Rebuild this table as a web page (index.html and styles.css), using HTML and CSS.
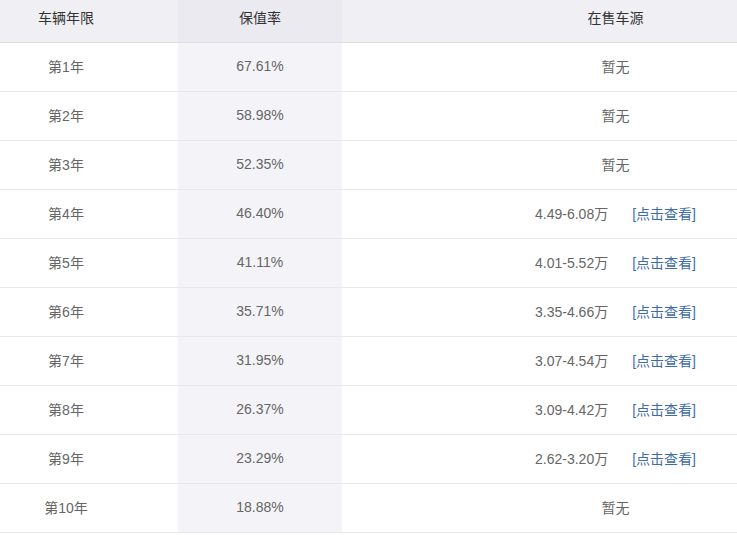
FILE: index.html
```html
<!DOCTYPE html>
<html lang="zh-CN">
<head>
<meta charset="utf-8">
<title>保值率</title>
<link rel="stylesheet" href="styles.css">
</head>
<body>
<table class="rate-table">
  <thead>
    <tr>
      <th class="c-year">车辆年限</th>
      <th class="c-rate">保值率</th>
      <th class="c-src">在售车源</th>
    </tr>
  </thead>
  <tbody>
    <tr><td class="c-year">第1年</td><td class="c-rate">67.61%</td><td class="c-src">暂无</td></tr>
    <tr><td class="c-year">第2年</td><td class="c-rate">58.98%</td><td class="c-src">暂无</td></tr>
    <tr><td class="c-year">第3年</td><td class="c-rate">52.35%</td><td class="c-src">暂无</td></tr>
    <tr><td class="c-year">第4年</td><td class="c-rate">46.40%</td><td class="c-src"><span class="price">4.49-6.08万</span><a class="link" href="#">[点击查看]</a></td></tr>
    <tr><td class="c-year">第5年</td><td class="c-rate">41.11%</td><td class="c-src"><span class="price">4.01-5.52万</span><a class="link" href="#">[点击查看]</a></td></tr>
    <tr><td class="c-year">第6年</td><td class="c-rate">35.71%</td><td class="c-src"><span class="price">3.35-4.66万</span><a class="link" href="#">[点击查看]</a></td></tr>
    <tr><td class="c-year">第7年</td><td class="c-rate">31.95%</td><td class="c-src"><span class="price">3.07-4.54万</span><a class="link" href="#">[点击查看]</a></td></tr>
    <tr><td class="c-year">第8年</td><td class="c-rate">26.37%</td><td class="c-src"><span class="price">3.09-4.42万</span><a class="link" href="#">[点击查看]</a></td></tr>
    <tr><td class="c-year">第9年</td><td class="c-rate">23.29%</td><td class="c-src"><span class="price">2.62-3.20万</span><a class="link" href="#">[点击查看]</a></td></tr>
    <tr><td class="c-year">第10年</td><td class="c-rate">18.88%</td><td class="c-src">暂无</td></tr>
  </tbody>
</table>
</body>
</html>
```
FILE: styles.css
```css
html, body {
  margin: 0;
  padding: 0;
  background: #ffffff;
}

body {
  font-family: "Liberation Sans", "Noto Sans CJK SC", sans-serif;
  font-size: 14px;
  color: #666666;
}

.rate-table {
  width: 737px;
  border-collapse: collapse;
  table-layout: fixed;
}

.rate-table th,
.rate-table td {
  padding: 0;
  text-align: center;
  vertical-align: middle;
  white-space: nowrap;
}

.rate-table th {
  height: 42px;
  padding-bottom: 7px;
  box-sizing: border-box;
  background: #f0f0f4;
  color: #333333;
  font-weight: normal;
  border-bottom: 1px solid #dedee2;
}

.rate-table td {
  height: 46px;
  padding-bottom: 2px;
  box-sizing: content-box;
  border-bottom: 1px solid #e8e8eb;
}

.c-year {
  width: 178px;
  padding-right: 46px !important;
  box-sizing: border-box;
}

.c-rate {
  width: 164px;
}

td.c-rate {
  background: #f4f4f8;
}

th.c-rate {
  background: #eaeaf0;
}

.c-src {
  padding-left: 152px !important;
}

.price {
  margin-right: 24px;
}

.link {
  color: #3f6ca6;
  text-decoration: none;
}
```
